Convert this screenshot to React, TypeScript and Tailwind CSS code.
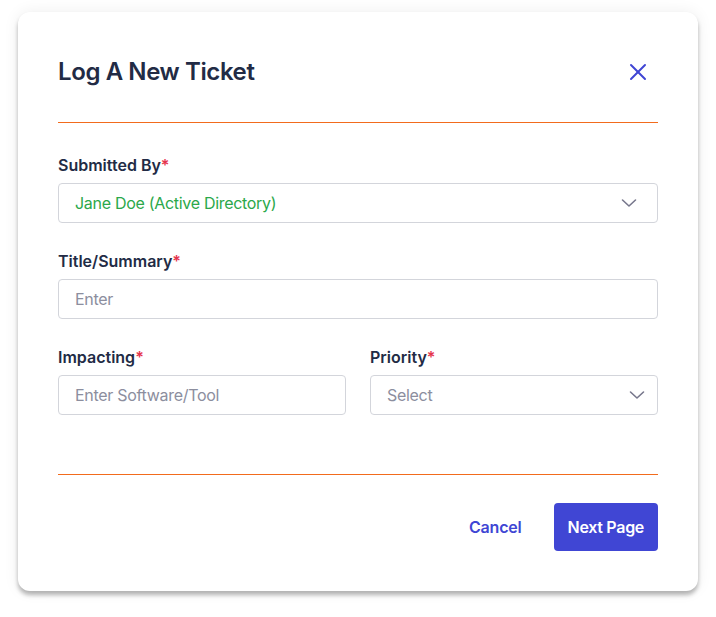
import { X } from "lucide-react"

function Chevron() {
  return (
    <svg width="16" height="10" viewBox="0 0 16 10" fill="none" className="shrink-0">
      <path d="M1.5 2 L8 8 L14.5 2" stroke="#77778c" strokeWidth="1.6" strokeLinecap="round" strokeLinejoin="round" />
    </svg>
  )
}

function Label({ children }: { children: string }) {
  return (
    <label className="mb-2 block text-[16px] leading-5 font-semibold text-[#222b45]">
      {children}
      <span className="text-[#e5344d]">*</span>
    </label>
  )
}

export default function App() {
  return (
    <div className="min-h-[617px] w-[716px] bg-white pt-3 font-['Inter',sans-serif]">
      <div className="mx-[18px] w-[680px] rounded-xl bg-white px-10 pt-10 pb-10 shadow-[0_4px_4px_rgba(0,0,0,0.28),0_0_16px_rgba(0,0,0,0.07)]">
        {/* Header */}
        <div className="box-content flex h-10 items-center justify-between border-b border-[#f26b1d] pb-[30px]">
          <h2 className="text-[24px] leading-8 font-semibold tracking-[-0.4px] text-[#222b45]">
            Log A New Ticket
          </h2>
          <button className="flex h-10 w-10 items-center justify-center text-[#4046d4]">
            <X size={28} strokeWidth={1.7} />
          </button>
        </div>

        {/* Form */}
        <div className="mt-8 flex flex-col gap-7">
          <div>
            <Label>Submitted By</Label>
            <div className="flex h-10 items-center justify-between rounded-[4px] border border-[#d3d5db] pr-5 pl-4">
              <span className="text-[16px] tracking-[-0.3px] text-[#2ba84a]">Jane Doe (Active Directory)</span>
              <Chevron />
            </div>
          </div>

          <div>
            <Label>Title/Summary</Label>
            <div className="flex h-10 items-center rounded-[4px] border border-[#d3d5db] px-4">
              <span className="text-[16px] tracking-[-0.3px] text-[#8c8e9e]">Enter</span>
            </div>
          </div>

          <div className="grid grid-cols-2 gap-6">
            <div>
              <Label>Impacting</Label>
              <div className="flex h-10 items-center rounded-[4px] border border-[#d3d5db] px-4">
                <span className="text-[16px] tracking-[-0.3px] text-[#8c8e9e]">Enter Software/Tool</span>
              </div>
            </div>
            <div>
              <Label>Priority</Label>
              <div className="flex h-10 items-center justify-between rounded-[4px] border border-[#d3d5db] pr-3 pl-4">
                <span className="text-[16px] tracking-[-0.3px] text-[#8c8e9e]">Select</span>
                <Chevron />
              </div>
            </div>
          </div>
        </div>

        {/* Footer */}
        <div className="mt-[59px] border-t border-[#f26b1d] pt-7">
          <div className="flex items-center justify-end gap-8">
            <button className="text-[16px] font-semibold tracking-[-0.2px] text-[#4046d4]">Cancel</button>
            <button className="h-12 rounded-[4px] bg-[#4046d4] px-[14px] text-[16px] font-semibold tracking-[-0.3px] text-white">
              Next Page
            </button>
          </div>
        </div>
      </div>
    </div>
  )
}
